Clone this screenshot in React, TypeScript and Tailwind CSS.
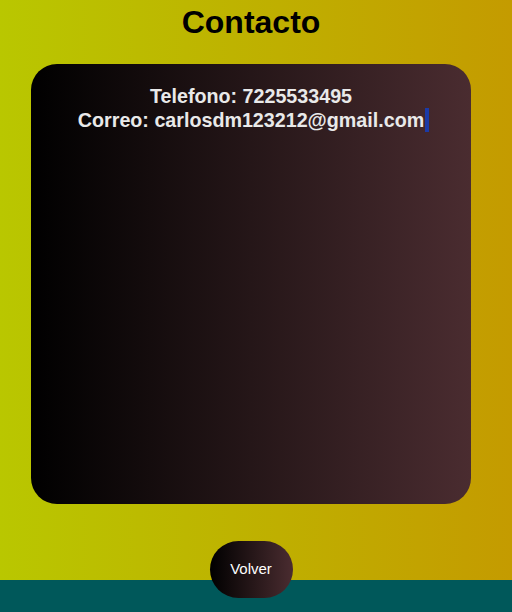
export default function App() {
  return (
    <div
      className="w-[512px] h-[612px] flex flex-col bg-[linear-gradient(to_right,#b9c700,#c49b00)] overflow-hidden"
      style={{ fontFamily: '"Liberation Sans", Arial, sans-serif' }}
    >
      <div className="w-[502px] flex flex-col flex-1">
        <h1 className="mt-[4px] text-center text-[32px] font-bold text-black leading-[37px]">Contacto</h1>
        <div className="mx-[31px] mt-[23px] h-[440px] rounded-[26px] bg-[linear-gradient(to_right,#000000,#4a2c30)] pt-[20px] text-center">
          <p className="text-[19.7px] font-bold leading-[24px] text-[#e9e9e9]">Telefono: 7225533495</p>
          <p className="text-[19.7px] font-bold leading-[24px] text-[#e9e9e9]">
            Correo: carlosdm123212@gmail.com
            <span className="inline-block align-middle w-[4px] h-[24px] bg-[#1b3aa6] ml-[1px] -mr-[5px] -mt-[3px]"></span>
          </p>
        </div>
        <div className="flex-1"></div>
        <div className="relative z-10 flex justify-center -mb-[18px]">
          <button className="w-[83px] h-[57px] rounded-full bg-[linear-gradient(to_right,#000000,#4a2c30)] text-white text-[15px]">
            Volver
          </button>
        </div>
      </div>
      <div className="h-[32px] bg-[#00585a]"></div>
    </div>
  );
}
